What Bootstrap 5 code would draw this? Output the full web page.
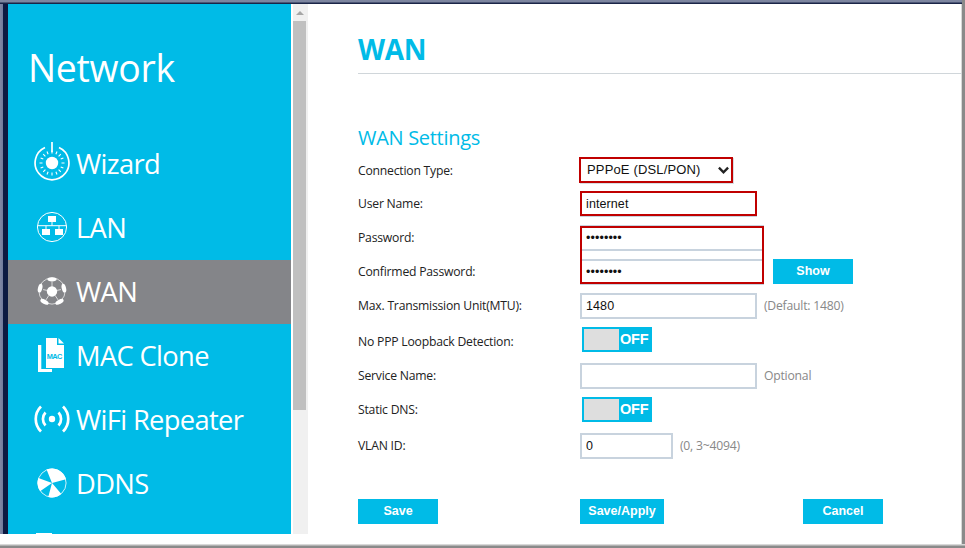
<!DOCTYPE html>
<html lang="en">
<head>
<meta charset="utf-8">
<title>WAN</title>
<link href="https://cdn.jsdelivr.net/npm/bootstrap@5.3.0/dist/css/bootstrap.min.css" rel="stylesheet">
<script src="https://cdn.jsdelivr.net/npm/bootstrap@5.3.0/dist/js/bootstrap.bundle.min.js"></script>
<style>
html,body{height:548px;overflow:hidden;background:#fff}
body{font-family:"Open Sans","Noto Sans",sans-serif;color:#222}
.win{width:965px;height:548px;display:flex;flex-direction:column;border-right:3px solid #8a8a8a;box-shadow:inset -1px 0 0 #d8d8d8}
.win-top{height:4px;flex:none;background:linear-gradient(#7d86a0 0,#7d86a0 2px,#1a2548 3px)}
.win-main{height:530px;flex:none;display:flex;overflow:hidden}
.win-left{width:8px;flex:none;background:linear-gradient(90deg,#8088a4 0,#6f7a9c 3px,#0c1a42 3px)}
.win-low{height:10px;flex:none;margin-left:1px;margin-right:1px;background:#fff}
.win-bottom{height:4px;flex:none;background:linear-gradient(#d8d8d8 0,#d8d8d8 1px,#8a8a8a 2px);margin-right:-3px}
.side{width:283px;flex:none;background:#00bbe7;color:#fff;overflow:hidden}
.side-title{font-size:37.4px;line-height:50px;padding:39px 0 0 20px;height:128px;letter-spacing:-.3px}
.side-item{height:64px;display:flex;align-items:center;color:#fff;font-size:27.3px;padding:0;text-decoration:none;letter-spacing:-.65px}
.side-item:hover{color:#fff}
.side-item.now{background:#848589}
.side-ico{width:68px;flex:none;display:flex;justify-content:center;padding-left:20px;margin-bottom:2px}
.side-ico svg{display:block}
.ico-up{margin-bottom:4px}
.ico-cut{margin-left:-16px;margin-top:17px}
.sbar{width:17px;flex:none;border-left:2px solid #fff;background:#f0f0f0;display:flex;flex-direction:column;align-items:flex-start}
.sbar-up{height:17px;width:15px;display:flex;justify-content:center;align-items:center}
.sbar-up i{display:block;border:solid transparent;border-width:0 4px 4px;border-bottom-color:#a6a6a6;margin-left:-2px}
.sbar-thumb{width:13px;height:389px;background:#c0c0c0}
.pane{flex:1;min-width:0;padding-left:50px}
.pane-head{height:70px;border-bottom:1px solid #d0d6da;color:#00bbe7;font:700 28px/42px "Open Sans",sans-serif;letter-spacing:-.3px;padding-top:24px}
.pane-sub{color:#00bbe7;font-size:20px;line-height:26px;margin:51px 0 6px;height:26px;font-weight:400;letter-spacing:-.3px}
.fld{display:flex;align-items:flex-start;height:34px;font-size:12.2px;letter-spacing:-.22px}
.fld.tall{height:36px}
.fld-name{width:222px;flex:none;line-height:26px;margin:0}
.fld-first .fld-name{line-height:28px}
.fld.low .fld-name{line-height:30px}
.fld-box{width:177px;height:26px;border:2px solid #c8d3de;border-radius:0;padding:0 4px;font:12.5px/20px "Liberation Sans",sans-serif;color:#111;background:#fff;box-shadow:none;letter-spacing:.1px}
.fld-box.tiny{width:93px}
.fld-box.broad{width:184px}
.fld-box.hot{border-color:#c00000;height:25px;box-shadow:0 1px 0 #c8d3de}
.fld-pick{width:154px;height:26px;margin-left:-1px;border:2px solid #c00000;border-radius:0;padding:0 6px;font:13px/20px "Liberation Sans",sans-serif;letter-spacing:.15px;color:#111;appearance:none;background-image:url("data:image/svg+xml,%3csvg xmlns='http://www.w3.org/2000/svg' viewBox='0 0 12 8'%3e%3cpath fill='none' stroke='%23222' stroke-width='2.600' d='M1 1.500l5 5 5-5'/%3e%3c/svg%3e");background-position:right 2px center;background-size:11px 8px;box-shadow:1px 1px 0 #d8dde2}
.fld-hint{color:#888;line-height:26px;margin-left:7px}
.twin{position:relative}
.twin-mark{position:absolute;left:222px;top:1px;width:184px;height:58px;border:2px solid #c00000;pointer-events:none}
.swt{width:70px;height:25px;margin-left:2px;background:#00bbe7;padding:2px;display:flex;color:#fff;font:700 14.5px/21px "Liberation Sans",sans-serif;letter-spacing:-.2px}
.swt-knob{width:35px;height:21px;background:#dedede;margin-right:1px}
.act{background:#00bbe7;color:#fff;border:0;border-radius:0;height:25px;padding:0;font:700 12.5px/25px "Liberation Sans",sans-serif;width:80px}
.act:hover{background:#00bbe7;color:#fff}
.act-show{margin-left:9px}
.act-mid{width:84px;margin:0 139px 0 142px}
.acts{display:flex;margin-top:32px}
</style>
</head>
<body>
<div class="win">
  <div class="win-top"></div>
  <div class="win-main">
    <div class="win-left"></div>
    <aside class="side">
      <div class="side-title">Network</div>
      <nav class="nav flex-column flex-nowrap">
        <a class="side-item" href="#"><span class="side-ico ico-up"><svg width="36" height="40" viewBox="0 0 36 40" fill="none" stroke="#fff"><path d="M11 5.500A16.900 16.900 0 1 0 25 5.500" stroke-width="1.700"/><path d="M18 0v10" stroke-width="1.700"/><circle cx="18" cy="21" r="6.200" fill="#fff" stroke="none"/><path d="M18 8.500v3M18 30.500v3M5.500 21h3M27.500 21h3M9.200 12.200l2.200 2.200M24.600 27.600l2.200 2.200M9.200 29.800l2.200-2.200M24.600 14.400l2.200-2.200M6.600 16l2.700 1.100M26.700 24.900l2.700 1.100M6.600 26l2.700-1.100M26.700 17.100l2.700-1.100M13 9.500l1.100 2.700M21.900 29.800l1.100 2.700M13 32.500l1.100-2.700M21.900 12.200l1.100-2.700" stroke-width="1.100"/></svg></span><span>Wizard</span></a>
        <a class="side-item" href="#"><span class="side-ico"><svg width="32" height="32" viewBox="0 0 32 32" fill="none" stroke="#fff"><circle cx="16" cy="16" r="14.600" stroke-width="1"/><path d="M1.500 14.700h29M16 11v3.700M10 14.700V18M23 14.700V18" stroke-width="1"/><rect x="12" y="5" width="8" height="6" fill="#fff" stroke="none"/><rect x="6" y="18" width="8" height="6" fill="#fff" stroke="none"/><rect x="19" y="18" width="8" height="6" fill="#fff" stroke="none"/></svg></span><span>LAN</span></a>
        <a class="side-item now" href="#"><span class="side-ico"><svg width="30" height="30" viewBox="0 0 32 32" fill="none" stroke="#fff" stroke-width="1"><circle cx="16" cy="16" r="14" stroke-width=".9" stroke-opacity=".8"/><circle cx="16" cy="16.500" r="5.500" fill="#fff" stroke="none"/><path d="M16 6v6M6.500 14.500l5 1M25.500 14.500l-5 1M9.500 25.500l3.300-5M22.500 25.500l-3.300-5" stroke-opacity=".75"/><ellipse cx="16" cy="3.500" rx="4.800" ry="2.300" fill="#fff" stroke="none"/><ellipse cx="3.300" cy="13" rx="2.300" ry="4.800" fill="#fff" stroke="none" transform="rotate(14 3.300 13)"/><ellipse cx="28.700" cy="13" rx="2.300" ry="4.800" fill="#fff" stroke="none" transform="rotate(-14 28.700 13)"/><ellipse cx="8" cy="27.500" rx="4.800" ry="2.300" fill="#fff" stroke="none" transform="rotate(28 8 27.500)"/><ellipse cx="24" cy="27.500" rx="4.800" ry="2.300" fill="#fff" stroke="none" transform="rotate(-28 24 27.500)"/></svg></span><span>WAN</span></a>
        <a class="side-item" href="#"><span class="side-ico"><svg width="28" height="34" viewBox="0 0 28 34" fill="#fff"><path d="M0 7h3.300v24h10.700v3H0z"/><path d="M8 0h11v7h7v23H8z"/><path d="M20.500 0l5.500 5.500h-5.500z"/><text x="8.800" y="21" font-family="Liberation Sans" font-size="7.400" font-weight="700" fill="#00bbe7">MAC</text></svg></span><span>MAC Clone</span></a>
        <a class="side-item" href="#"><span class="side-ico"><svg width="36" height="28" viewBox="0 0 36 28" fill="none" stroke="#fff" stroke-width="2.700"><circle cx="18" cy="14" r="3.200" fill="#fff" stroke="none"/><path d="M11.500 7.500a9.500 9.500 0 0 0 0 13M24.500 7.500a9.500 9.500 0 0 1 0 13"/><path d="M7 1.500a17.500 17.500 0 0 0 0 25M29 1.500a17.500 17.500 0 0 1 0 25"/></svg></span><span>WiFi Repeater</span></a>
        <a class="side-item" href="#"><span class="side-ico"><svg width="30" height="30" viewBox="0 0 30 30"><circle cx="15" cy="15" r="14.100" fill="#00bbe7" stroke="#fff" stroke-width=".8"/><path d="M15 15L9.570 1.560A14.500 14.500 0 0 1 29 11.250zM15 15L24.300 26.100A14.500 14.500 0 0 1 11.250 29zM15 15L3.100 23.300A14.500 14.500 0 0 1 1.370 10.040z" fill="#fff"/></svg></span><span>DDNS</span></a>
        <a class="side-item align-items-start" href="#"><span class="side-ico"><svg class="ico-cut" width="16" height="4" viewBox="0 0 16 4" fill="#fff"><rect width="16" height="4"/></svg></span></a>
      </nav>
    </aside>
    <div class="sbar"><div class="sbar-up"><i></i></div><div class="sbar-thumb"></div></div>
    <main class="pane">
      <h1 class="pane-head mb-0">WAN</h1>
      <h2 class="pane-sub">WAN Settings</h2>
      <form onsubmit="return false">
        <div class="fld fld-first"><label class="fld-name">Connection Type:</label><select class="form-select fld-pick"><option>PPPoE (DSL/PON)</option></select></div>
        <div class="fld"><label class="fld-name">User Name:</label><input class="form-control fld-box hot" value="internet"></div>
        <div class="twin">
          <div class="fld"><label class="fld-name">Password:</label><input class="form-control fld-box broad" type="password" value="12345678"></div>
          <div class="fld"><label class="fld-name">Confirmed Password:</label><input class="form-control fld-box broad" type="password" value="12345678"><button type="button" class="btn act act-show">Show</button></div>
          <div class="twin-mark"></div>
        </div>
        <div class="fld"><label class="fld-name">Max. Transmission Unit(MTU):</label><input class="form-control fld-box" value="1480"><span class="fld-hint">(Default: 1480)</span></div>
        <div class="fld tall low"><label class="fld-name">No PPP Loopback Detection:</label><div class="swt"><span class="swt-knob"></span>OFF</div></div>
        <div class="fld"><label class="fld-name">Service Name:</label><input class="form-control fld-box"><span class="fld-hint">Optional</span></div>
        <div class="fld tall"><label class="fld-name">Static DNS:</label><div class="swt"><span class="swt-knob"></span>OFF</div></div>
        <div class="fld"><label class="fld-name">VLAN ID:</label><input class="form-control fld-box tiny" value="0"><span class="fld-hint">(0, 3~4094)</span></div>
        <div class="acts"><button type="button" class="btn act">Save</button><button type="button" class="btn act act-mid">Save/Apply</button><button type="button" class="btn act">Cancel</button></div>
      </form>
    </main>
  </div>
  <div class="win-low"></div>
  <div class="win-bottom"></div>
</div>
</body>
</html>
